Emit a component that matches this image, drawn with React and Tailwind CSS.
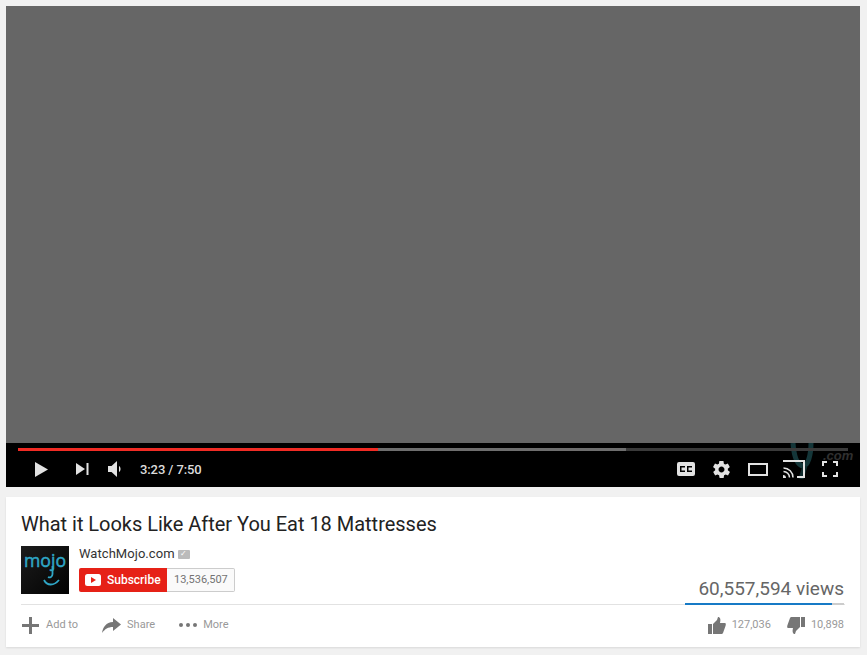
import React from 'react';

const PlayerControls = () => (
    <div className="relative h-[44px] bg-black text-[#dcdcdc]">
        {/* watermark that shows through the bar */}
        <svg className="absolute left-[784px] top-0" width="30" height="36" viewBox="0 0 30 36" fill="none">
            <path d="M3 0 C4 14 7 22 13 23 C18 23 21 12 21 0" stroke="#143639" strokeWidth="5" />
            <path d="M15 23 L11 36" stroke="#0e2a2c" strokeWidth="5" />
        </svg>
        <span className="absolute left-[817px] top-[5px] font-['Liberation_Sans',sans-serif] text-[13px] font-bold italic leading-[15px] text-[#303030]">.com</span>

        {/* progress */}
        <div className="absolute left-[12px] top-[5px] flex h-[3px] w-[830px] bg-[#3a3a3a]">
            <div className="w-[360px] bg-[#f12b24]" />
            <div className="w-[248px] bg-[#6e6e6e]" />
        </div>

        <div className="relative flex h-full items-center pt-[8px]">
            <svg className="ml-[29px]" width="13" height="15" viewBox="0 0 13 15">
                <path d="M0 0 L13 7.500 L0 15 Z" fill="#e2e2e2" />
            </svg>
            <svg className="ml-[28px]" width="13" height="12" viewBox="0 0 13 12">
                <path d="M0 0 L9 6 L0 12 Z" fill="#e2e2e2" />
                <rect x="10.500" y="0" width="2" height="12" fill="#e2e2e2" />
            </svg>
            <svg className="ml-[19px]" width="15" height="16" viewBox="0 0 15 16">
                <path d="M0 5 H3.500 L9 0 V16 L3.500 11 H0 Z" fill="#e2e2e2" />
                <path d="M11 5 C13 6 13 10 11 11 Z" fill="#e2e2e2" />
            </svg>
            <span className="ml-[17px] text-[13px] font-medium leading-none tracking-[-0.1px]">3:23 / 7:50</span>

            <div className="ml-auto flex items-center">
                <svg width="18" height="14" viewBox="0 0 18 14">
                    <path fillRule="evenodd" fill="#e2e2e2" d="M2 0 H16 A2 2 0 0 1 18 2 V12 A2 2 0 0 1 16 14 H2 A2 2 0 0 1 0 12 V2 A2 2 0 0 1 2 0 Z M3 4 V10 H8 V8.500 H4.500 V5.500 H8 V4 Z M10 4 V10 H15 V8.500 H11.500 V5.500 H15 V4 Z" />
                </svg>
                <svg className="ml-[18px]" width="17" height="17" viewBox="2 2 20 20">
                    <path fill="#e2e2e2" fillRule="evenodd" d="M19.400 13c.1-.3.1-.7.1-1s0-.7-.1-1l2.100-1.600c.2-.2.2-.4.1-.6l-2-3.500c-.1-.2-.4-.3-.6-.2l-2.500 1c-.5-.4-1.100-.7-1.700-1l-.4-2.600c0-.3-.2-.5-.5-.5h-4c-.3 0-.5.2-.5.400l-.4 2.700c-.6.2-1.200.6-1.700 1l-2.500-1c-.2-.1-.5 0-.6.200l-2 3.500c-.1.200-.1.500.1.600L4.600 11c-.1.300-.1.700-.1 1s0 .7.100 1l-2.100 1.600c-.2.200-.2.400-.1.600l2 3.500c.1.200.4.300.6.200l2.500-1c.5.400 1.100.7 1.700 1l.4 2.600c0 .3.2.5.5.5h4c.3 0 .5-.2.5-.4l.4-2.700c.6-.2 1.200-.6 1.700-1l2.500 1c.2.100.5 0 .6-.2l2-3.500c.1-.2.100-.5-.1-.6L19.400 13zM12 15.500c-1.900 0-3.500-1.600-3.500-3.500s1.600-3.500 3.500-3.500 3.500 1.600 3.500 3.500-1.600 3.500-3.500 3.500z" />
                </svg>
                <div className="ml-[18px] h-[13px] w-[20px] border-2 border-[#e2e2e2]" />
                <svg className="ml-[15px]" width="22" height="18" viewBox="0 0 22 18" fill="none" stroke="#e2e2e2">
                    <path d="M0 1 H21 V17 H14" strokeWidth="2" />
                    <path d="M0.500 8 A9.500 9.500 0 0 1 10 17.500" strokeWidth="1.500" />
                    <path d="M0.500 11.500 A6 6 0 0 1 6.500 17.500" strokeWidth="1.500" />
                    <path d="M0 15 A3 3 0 0 1 3 18 H0 Z" fill="#e2e2e2" stroke="none" />
                </svg>
                <svg className="ml-[17px] mr-[22px]" width="16" height="16" viewBox="0 0 16 16" fill="none" stroke="#e2e2e2" strokeWidth="2">
                    <path d="M1 5 V1 H5 M11 1 H15 V5 M15 11 V15 H11 M5 15 H1 V11" />
                </svg>
            </div>
        </div>
    </div>
);

const MojoLogo = () => (
    <svg className="shrink-0" width="48" height="48" viewBox="0 0 48 48">
        <defs>
            <linearGradient id="mojoBg" x1="0" y1="0" x2="1" y2="1">
                <stop offset="0" stopColor="#1c1c1c" />
                <stop offset="1" stopColor="#020202" />
            </linearGradient>
        </defs>
        <rect width="48" height="48" fill="url(#mojoBg)" />
        <text x="3" y="21" fontFamily="'Open Sans', sans-serif" fontSize="18" fill="#2fa6c6" stroke="#2fa6c6" strokeWidth="0.500" textLength="42" lengthAdjust="spacingAndGlyphs">mojo</text>
        <path d="M31.500 20 V28 C31.500 31 29 32 27 31" stroke="#2fa6c6" strokeWidth="1.800" fill="none" />
        <path d="M23 34 C26 40 33 40 38 34" stroke="#2fa6c6" strokeWidth="1.800" fill="none" />
    </svg>
);

const App = () => {
    return (
        <div className="h-[655px] w-[867px] overflow-hidden bg-[#f1f1f1] pl-[6px] pr-[7px] pt-[6px] font-['Roboto',sans-serif]">
            <div className="flex h-[481px] flex-col">
                <div className="flex-1 bg-[#666666]" />
                <PlayerControls />
            </div>

            <div className="mt-[10px] h-[150px] bg-white px-[15px] pt-[15px] shadow-[0_1px_2px_rgba(0,0,0,0.1)]">
                <h1 className="text-[20px] leading-[24px] tracking-[-0.02px] text-[#222222]">What it Looks Like After You Eat 18 Mattresses</h1>

                <div className="relative mt-[10px] flex h-[59px] border-b border-[#e2e2e2]">
                    <MojoLogo />
                    <div className="ml-[10px]">
                        <div className="flex items-center">
                            <span className="text-[13px] font-normal leading-[16px] tracking-[0.05px] text-[#333333]">WatchMojo.com</span>
                            <span className="ml-[3px] flex h-[9px] w-[12px] items-center justify-center rounded-[1px] bg-[#bbbbbb] text-[8px] leading-none text-white">✓</span>
                        </div>
                        <div className="mt-[6px] flex h-[24px]">
                            <div className="flex w-[88px] items-center rounded-l-[2px] bg-[#e62117] pl-[6px] text-white">
                                <svg width="16" height="12" viewBox="0 0 16 12">
                                    <rect width="16" height="12" rx="2.500" fill="#ffffff" />
                                    <path d="M6 3 L11 6 L6 9 Z" fill="#e62117" />
                                </svg>
                                <span className="ml-[6px] text-[12px] font-medium">Subscribe</span>
                            </div>
                            <div className="flex items-center rounded-r-[2px] border border-l-0 border-[#cccccc] bg-[#fafafa] pl-[7px] pr-[6px] text-[11px] text-[#737373]">13,536,507</div>
                        </div>
                    </div>

                    <div className="absolute bottom-[-1px] right-[1px] w-[159px] text-right">
                        <div className="text-[19px] leading-[22px] text-[#666666]">60,557,594 views</div>
                        <div className="mt-[3px] flex h-[2px] bg-[#cccccc]">
                            <div className="w-[147px] bg-[#167ac6]" />
                        </div>
                    </div>
                </div>

                <div className="flex h-[40px] items-center pr-[1px] text-[11px] text-[#999999]">
                    <svg className="ml-px" width="17" height="17" viewBox="0 0 17 17">
                        <path d="M7 0 H10 V7 H17 V10 H10 V17 H7 V10 H0 V7 H7 Z" fill="#767676" />
                    </svg>
                    <span className="ml-[7px]">Add to</span>
                    <svg className="ml-[24px]" width="19" height="15" viewBox="0 0 19 15">
                        <path d="M11 0 L19 6.500 L11 13 V9 C6 9 3 11 0 15 C1 9 4 4.500 11 4 Z" fill="#767676" />
                    </svg>
                    <span className="ml-[6px]">Share</span>
                    <div className="ml-[24px] flex gap-[3px]">
                        <i className="h-[4px] w-[4px] rounded-full bg-[#767676]" />
                        <i className="h-[4px] w-[4px] rounded-full bg-[#767676]" />
                        <i className="h-[4px] w-[4px] rounded-full bg-[#767676]" />
                    </div>
                    <span className="ml-[6px]">More</span>

                    <div className="ml-auto flex items-center">
                        <svg width="18" height="17" viewBox="0 0 18 17">
                            <path d="M0 7 H4 V17 H0 Z M5 7 L9 3 L10 0 C12 0 13 2 12 6 H17 C18 6 18 8 17.500 9 L15 16 C15 16.500 14 17 13 17 H5 Z" fill="#767676" />
                        </svg>
                        <span className="ml-[6px]">127,036</span>
                        <svg className="ml-[16px]" width="18" height="17" viewBox="0 0 18 17">
                            <path d="M18 10 H14 V0 H18 Z M13 10 L9 14 L8 17 C6 17 5 15 6 11 H1 C0 11 0 9 0.500 8 L3 1 C3 0.500 4 0 5 0 H13 Z" fill="#767676" />
                        </svg>
                        <span className="ml-[6px]">10,898</span>
                    </div>
                </div>
            </div>
        </div>
    );
};

export default App;
